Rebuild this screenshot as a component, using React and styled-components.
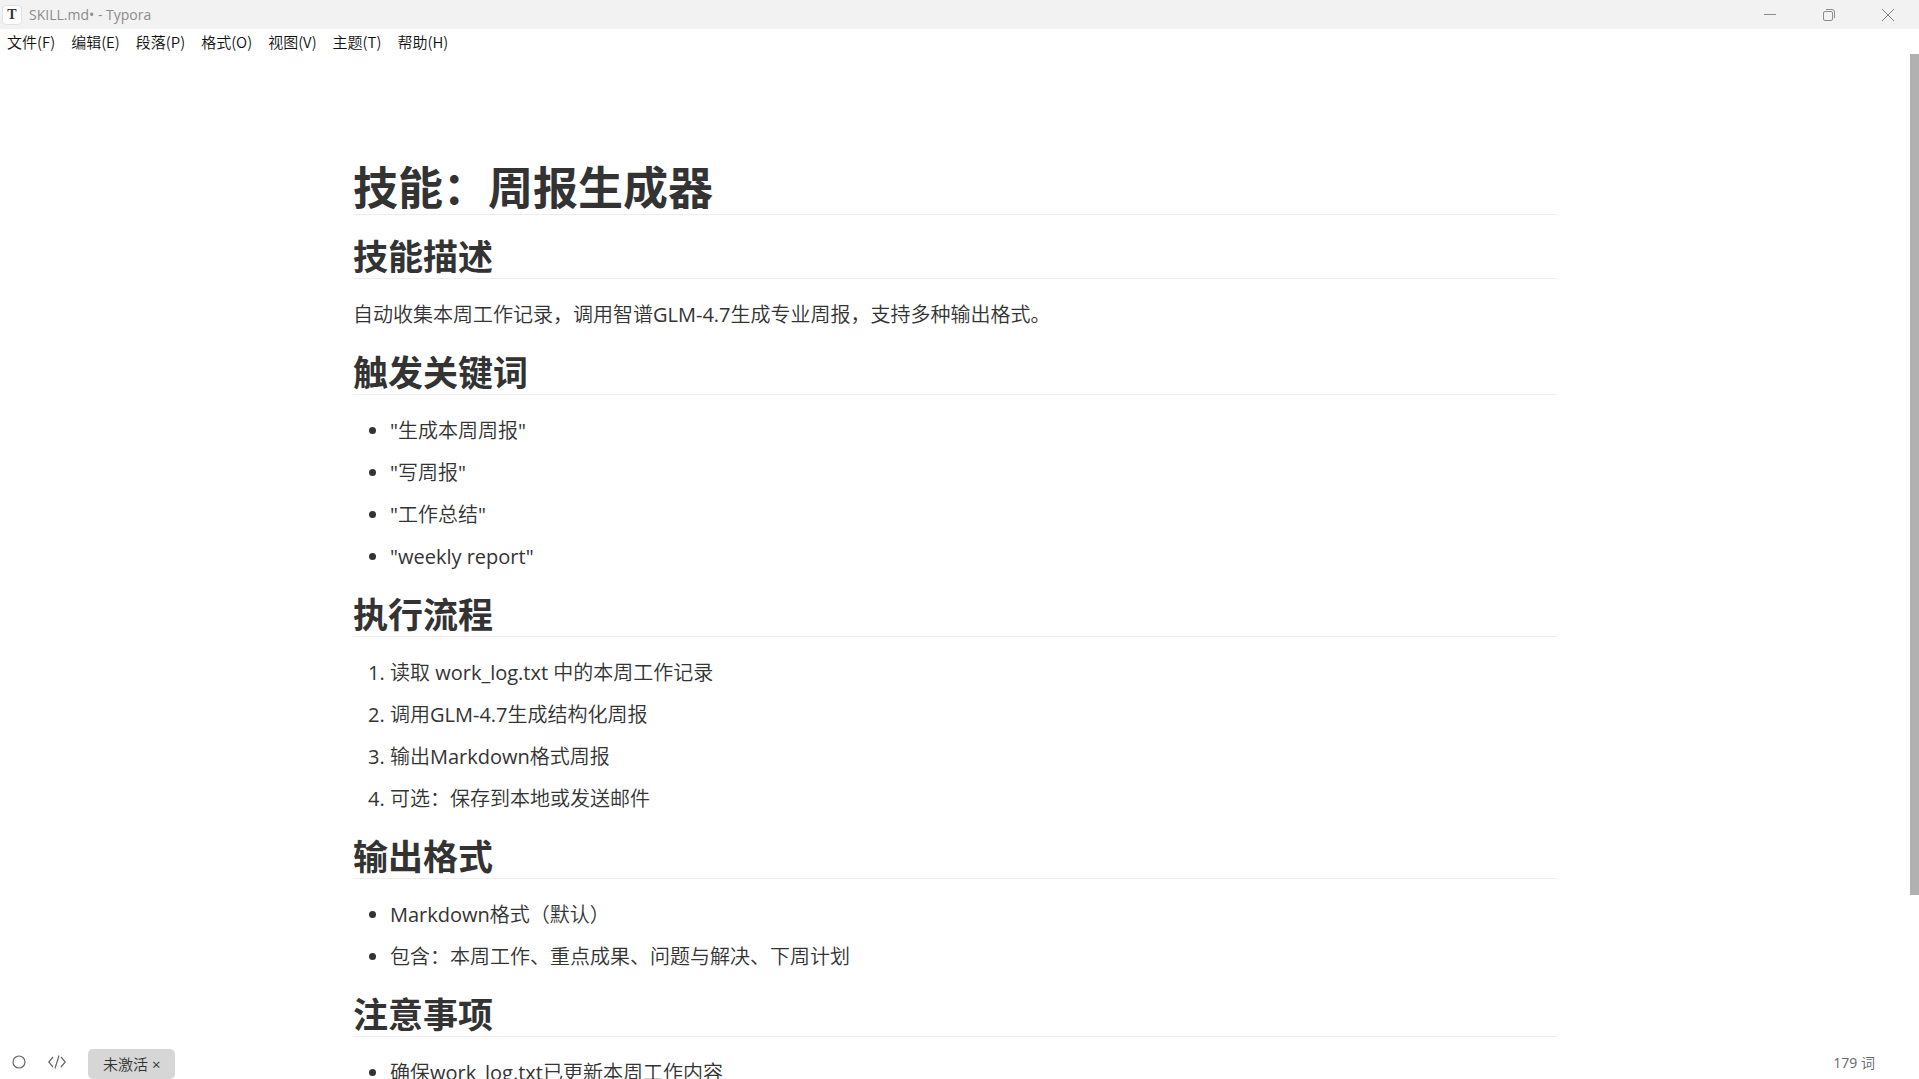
import React from "react";
import styled, { createGlobalStyle } from "styled-components";

const GlobalStyle = createGlobalStyle`
  * { box-sizing: border-box; }
  body {
    margin: 0;
    background: #fff;
    color: #333;
    font-family: "Open Sans", "Noto Sans CJK SC DemiLight", "Noto Sans CJK SC", sans-serif;
  }
  h1, h2 { font-family: "Open Sans", "Noto Sans CJK SC", sans-serif; }
  button { border: 0; padding: 0; background: none; font: inherit; color: inherit; cursor: pointer; }
`;

const Window = styled.div`
  position: relative;
  display: flex;
  flex-direction: column;
  height: 100vh;
  overflow: hidden;
`;

const TitleBar = styled.header`
  display: flex;
  flex: none;
  align-items: center;
  height: 29px;
  padding-left: 2px;
  background: #f2f2f2;
  color: #8c8c8c;
`;

const AppIcon = styled.span`
  display: grid;
  place-items: center;
  width: 20px;
  height: 20px;
  border: 1px solid #e2e2e2;
  border-radius: 4px;
  background: #fff;
  color: #333;
  font: bold 14px/18px "Liberation Serif", serif;
`;

const Title = styled.span`
  flex: 1;
  padding-left: 7px;
  font-size: 14px;
  line-height: 20px;
`;

const WindowButton = styled.button`
  display: grid;
  place-items: center;
  width: 59px;
  height: 29px;
`;

const WindowButtons = styled.div`
  display: flex;
  padding-right: 2px;
`;

const MenuBar = styled.nav`
  display: flex;
  flex: none;
  gap: 16px;
  height: 25px;
  padding-left: 7px;
  color: #111;
`;

const MenuItem = styled.button`
  height: 25px;
  font-size: 15px;
  line-height: 25px;
  font-family: "Noto Sans CJK SC DemiLight", "Noto Sans CJK SC", sans-serif;
`;

const Workspace = styled.div`
  display: flex;
  flex: 1;
  min-height: 0;
`;

const Editor = styled.main`
  flex: 1;
  overflow-y: auto;
  scrollbar-width: none;
`;

const Article = styled.article`
  max-width: 1204px;
  margin: 0 auto;
  padding: 108px 0 100px;
  font-size: 20px;
  line-height: 32px;
`;

const ScrollTrack = styled.div`
  flex: none;
  width: 9px;
`;

const ScrollThumb = styled.div`
  height: 82%;
  background: #b1b1b1;
`;

const H1 = styled.h1`
  margin: 0 0 20px;
  border-bottom: 1px solid #eee;
  font-size: 45px;
  line-height: 52px;
`;

const H2 = styled.h2`
  margin: 20px 0;
  border-bottom: 1px solid #eee;
  font-size: 35px;
  line-height: 43px;
`;

const Paragraph = styled.p`
  margin: 20px 0;
`;

const List = styled.ul`
  display: flex;
  flex-direction: column;
  gap: 10px;
  margin: 20px 0;
  padding-left: 37px;
`;

const StatusBar = styled.footer`
  position: absolute;
  left: 0;
  right: 9px;
  bottom: 0;
  display: flex;
  align-items: center;
  justify-content: space-between;
  height: 34px;
  padding: 0 35px 0 12px;
  color: #666;
  font-size: 14px;
  pointer-events: none;
`;

const StatusGroup = styled.div`
  display: flex;
  align-items: center;
  pointer-events: auto;
`;

const IconButton = styled.button`
  display: grid;
  place-items: center;
  width: 14px;
  height: 32px;
  margin-right: 22px;
`;

const CodeButton = styled(IconButton)`
  width: 18px;
`;

const License = styled.button`
  height: 30px;
  margin-top: 4px;
  padding: 0 15px;
  border-radius: 5px;
  background: #d6d6d6;
  color: #333;
  font-size: 15px;
  line-height: 30px;
`;

const menus = ["文件(F)", "编辑(E)", "段落(P)", "格式(O)", "视图(V)", "主题(T)", "帮助(H)"];

const sections = [
  { title: "技能描述", text: "自动收集本周工作记录，调用智谱GLM-4.7生成专业周报，支持多种输出格式。" },
  { title: "触发关键词", items: ['"生成本周周报"', '"写周报"', '"工作总结"', '"weekly report"'] },
  {
    title: "执行流程",
    ordered: true,
    items: [
      "读取 work_log.txt 中的本周工作记录",
      "调用GLM-4.7生成结构化周报",
      "输出Markdown格式周报",
      "可选：保存到本地或发送邮件",
    ],
  },
  { title: "输出格式", items: ["Markdown格式（默认）", "包含：本周工作、重点成果、问题与解决、下周计划"] },
  { title: "注意事项", items: ["确保work_log.txt已更新本周工作内容"] },
];

function Section({ title, text, items, ordered }) {
  return (
    <section>
      <H2>{title}</H2>
      {text && <Paragraph>{text}</Paragraph>}
      {items && (
        <List as={ordered ? "ol" : "ul"}>
          {items.map((item) => (
            <li key={item}>{item}</li>
          ))}
        </List>
      )}
    </section>
  );
}

export default function App() {
  return (
    <Window>
      <GlobalStyle />
      <TitleBar>
        <AppIcon>T</AppIcon>
        <Title>SKILL.md• - Typora</Title>
        <WindowButtons>
          <WindowButton aria-label="最小化">
            <svg width="12" height="12" viewBox="0 0 12 12" stroke="#8c8c8c">
              <path d="M0 5.5h12" />
            </svg>
          </WindowButton>
          <WindowButton aria-label="还原">
            <svg width="12" height="12" viewBox="0 0 12 12" fill="none" stroke="#8c8c8c">
              <rect x=".5" y="2.5" width="9" height="9" rx="1.5" />
              <path d="M3 .5h6a2.5 2.5 0 0 1 2.5 2.5v6" />
            </svg>
          </WindowButton>
          <WindowButton aria-label="关闭">
            <svg width="12" height="12" viewBox="0 0 12 12" stroke="#808080">
              <path d="M0 0l12 12M12 0L0 12" />
            </svg>
          </WindowButton>
        </WindowButtons>
      </TitleBar>
      <MenuBar>
        {menus.map((menu) => (
          <MenuItem key={menu}>{menu}</MenuItem>
        ))}
      </MenuBar>
      <Workspace>
        <Editor>
          <Article>
            <H1>技能：周报生成器</H1>
            {sections.map((section) => (
              <Section key={section.title} {...section} />
            ))}
          </Article>
        </Editor>
        <ScrollTrack>
          <ScrollThumb />
        </ScrollTrack>
      </Workspace>
      <StatusBar>
        <StatusGroup>
          <IconButton aria-label="侧边栏">
            <svg width="14" height="14" viewBox="0 0 14 14" fill="none" stroke="#666" strokeWidth="1.2">
              <circle cx="7" cy="7" r="6" />
            </svg>
          </IconButton>
          <CodeButton aria-label="源代码模式">
            <svg width="18" height="14" viewBox="0 0 18 14" fill="none" stroke="#666" strokeWidth="1.2">
              <path d="M5 2L.8 7 5 12M13 2l4.200 5L13 12M11 .5L7 13.500" />
            </svg>
          </CodeButton>
          <License>未激活 ×</License>
        </StatusGroup>
        <span>179 词</span>
      </StatusBar>
    </Window>
  );
}
